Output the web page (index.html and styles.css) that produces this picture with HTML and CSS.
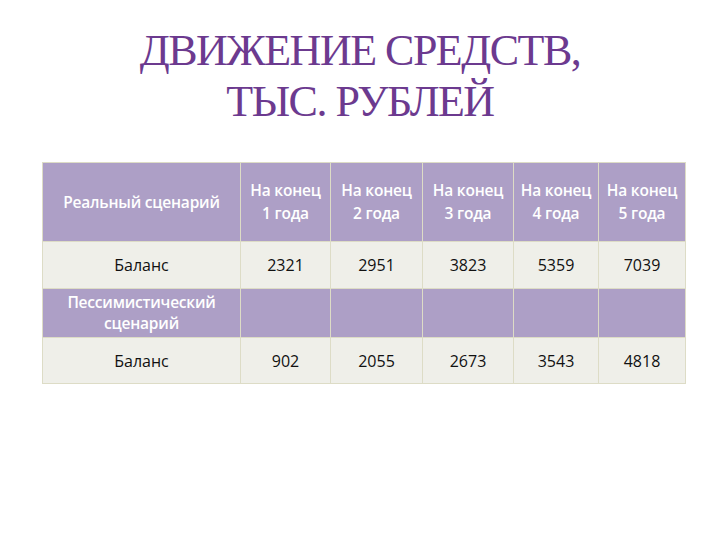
FILE: index.html
```html
<!DOCTYPE html>
<html lang="ru">
<head>
<meta charset="utf-8">
<link rel="stylesheet" href="styles.css">
</head>
<body>
<div class="slide">
  <h1 class="title">ДВИЖЕНИЕ СРЕДСТВ,<br>ТЫС. РУБЛЕЙ</h1>
  <table class="grid">
    <colgroup>
      <col class="c1"><col class="c2"><col class="c3"><col class="c4"><col class="c5"><col class="c6">
    </colgroup>
    <tr class="head r1">
      <td>Реальный сценарий</td>
      <td>На конец<br>1 года</td>
      <td>На конец<br>2 года</td>
      <td>На конец<br>3 года</td>
      <td>На конец<br>4 года</td>
      <td>На конец<br>5 года</td>
    </tr>
    <tr class="body r2">
      <td>Баланс</td><td>2321</td><td>2951</td><td>3823</td><td>5359</td><td>7039</td>
    </tr>
    <tr class="head r3">
      <td>Пессимистический<br>сценарий</td><td></td><td></td><td></td><td></td><td></td>
    </tr>
    <tr class="body r4">
      <td>Баланс</td><td>902</td><td>2055</td><td>2673</td><td>3543</td><td>4818</td>
    </tr>
  </table>
</div>
</body>
</html>
```
FILE: styles.css
```css
html, body {
  margin: 0;
  padding: 0;
  background: #ffffff;
}
.slide {
  width: 720px;
  height: 540px;
  overflow: hidden;
}
.title {
  margin: 0;
  padding-top: 25px;
  height: 162px;
  box-sizing: border-box;
  text-align: center;
  font-family: "Liberation Serif", "DejaVu Serif", serif;
  font-weight: normal;
  font-size: 44px;
  line-height: 51px;
  letter-spacing: -1.5px;
  color: #6c3a8f;
}
.grid {
  margin-left: 42px;
  border-collapse: collapse;
  table-layout: fixed;
  width: 643px;
  font-family: "Open Sans", "Noto Sans", sans-serif;
}
.c1 { width: 198px; }
.c2 { width: 90px; }
.c3 { width: 92px; }
.c4 { width: 91px; }
.c5 { width: 85px; }
.c6 { width: 87px; }
.grid td {
  border: 1px solid #dddcc6;
  text-align: center;
  vertical-align: middle;
  padding: 0;
}
.head td {
  background: #ad9fc6;
  color: #ffffff;
  font-weight: 600;
  font-size: 15.5px;
  line-height: 23px;
  letter-spacing: -0.2px;
}
.body td {
  background: #efefe9;
  color: #111111;
  font-size: 16px;
}
.r1 { height: 79px; }
.r2 { height: 47px; }
.r3 { height: 49px; }
.r3 td { line-height: 21px; }
.r4 { height: 46px; }
```
